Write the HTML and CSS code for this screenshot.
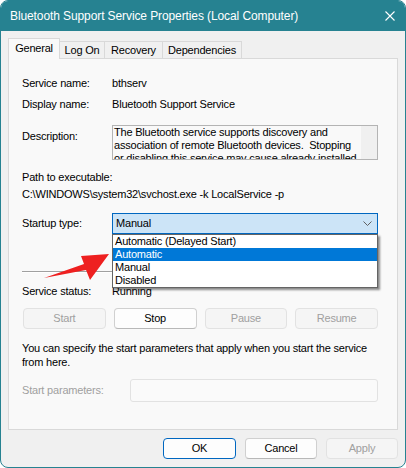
FILE: index.html
```html
<!DOCTYPE html>
<html>
<head>
<meta charset="utf-8">
<link rel="stylesheet" href="styles.css">
</head>
<body>
<div class="window">
  <div class="titlebar">
    <span class="title">Bluetooth Support Service Properties (Local Computer)</span>
    <svg class="close" width="10" height="10" viewBox="0 0 10 10"><path d="M0.5 0.5L9.5 9.5M9.5 0.5L0.5 9.5" stroke="#fff" stroke-width="1.1" fill="none"/></svg>
  </div>
  <div class="tabs">
    <div class="tab active t-general">General</div>
    <div class="tab t-logon">Log On</div>
    <div class="tab t-recovery">Recovery</div>
    <div class="tab t-deps">Dependencies</div>
  </div>
  <div class="panel">
    <div class="row row-name"><span class="label">Service name:</span><span>bthserv</span></div>
    <div class="row row-display"><span class="label">Display name:</span><span>Bluetooth Support Service</span></div>
    <div class="row row-desc">
      <span class="label desc-label">Description:</span>
      <div class="desc-box">
        <div class="desc-text">
          <span class="line">The Bluetooth service supports discovery and</span>
          <span class="line">association of remote Bluetooth devices.&nbsp; Stopping</span>
          <span class="line">or disabling this service may cause already installed</span>
        </div>
        <div class="desc-scroll"></div>
      </div>
    </div>
    <div class="path-label">Path to executable:</div>
    <div class="path-value">C:\WINDOWS\system32\svchost.exe -k LocalService -p</div>
    <div class="row row-startup">
      <span class="label">Startup type:</span>
      <div class="combo-wrap">
        <div class="combo">
          <span>Manual</span>
          <svg class="chev" width="9" height="5" viewBox="0 0 9 5"><path d="M0.5 0.5L4.5 4.5L8.5 0.5" stroke="#606060" stroke-width="1" fill="none"/></svg>
        </div>
        <div class="dropdown">
          <div class="opt">Automatic (Delayed Start)</div>
          <div class="opt selected">Automatic</div>
          <div class="opt">Manual</div>
          <div class="opt">Disabled</div>
        </div>
      </div>
    </div>
    <div class="separator"></div>
    <div class="row row-status"><span class="label">Service status:</span><span>Running</span></div>
    <div class="svc-buttons">
      <div class="btn disabled">Start</div>
      <div class="btn">Stop</div>
      <div class="btn disabled">Pause</div>
      <div class="btn disabled">Resume</div>
    </div>
    <p class="hint">You can specify the start parameters that apply when you start the service<br>from here.</p>
    <div class="row row-params">
      <span class="label params-label">Start parameters:</span>
      <div class="params-input"></div>
    </div>
  </div>
  <div class="footer">
    <div class="btn fbtn primary">OK</div>
    <div class="btn fbtn">Cancel</div>
    <div class="btn fbtn disabled">Apply</div>
  </div>
  <svg class="arrow" width="406" height="468" viewBox="0 0 406 468">
    <path d="M44 278 L84 264 L81 256 L109 254 L90 280 L86 270 Z" fill="#ee2020"/>
  </svg>
</div>
</body>
</html>
```

FILE: styles.css
```css
html, body {
  margin: 0;
  padding: 0;
  background: #ffffff;
}

body {
  font-family: "Liberation Sans", Arial, sans-serif;
  font-size: 11px;
  letter-spacing: -0.2px;
  color: #000;
}

.window {
  position: relative;
  width: 406px;
  height: 468px;
  box-sizing: border-box;
  border: 1px solid #268291;
  border-radius: 8px;
  background: #f0f0f0;
  overflow: hidden;
}

.titlebar {
  height: 30px;
  background: #268291;
  color: #fff;
  display: flex;
  align-items: center;
  justify-content: space-between;
  padding: 0 10px 0 9px;
}

.title {
  font-size: 12px;
  letter-spacing: -0.1px;
}

.close {
  display: block;
}

.tabs {
  display: flex;
  align-items: flex-end;
  height: 27px;
  padding-left: 7px;
}

.tab {
  height: 17px;
  box-sizing: border-box;
  border: 1px solid #d9d9d9;
  border-bottom: none;
  line-height: 16px;
  text-align: center;
  background: #f0f0f0;
  margin-left: -1px;
}

.tab.active {
  position: relative;
  z-index: 2;
  height: 21px;
  line-height: 18px;
  margin-left: 0;
  margin-bottom: -1px;
  background: #f9f9f9;
}

.t-general { width: 52px; }
.t-logon { width: 46px; }
.t-recovery { width: 59px; }
.t-deps { width: 80px; }

.panel {
  margin: 0 7px;
  height: 372px;
  box-sizing: border-box;
  border: 1px solid #d9d9d9;
  background: #f9f9f9;
  padding: 18px 18px 0 13px;
}

.row {
  display: flex;
  line-height: 13px;
}

.label {
  width: 90px;
  flex: none;
}

.row-display { margin-top: 8px; }

.row-desc { margin-top: 14px; }

.desc-label { padding-top: 5px; }

.desc-box {
  width: 266px;
  height: 35px;
  box-sizing: border-box;
  border: 1px solid #b4b4b4;
  display: flex;
  overflow: hidden;
  background: #f9f9f9;
}

.desc-text {
  flex: 1;
  padding: 0 0 0 1px;
  overflow: hidden;
}

.line {
  display: block;
  white-space: nowrap;
  line-height: 13px;
}

.desc-scroll {
  width: 16px;
  flex: none;
  background: #f0f0f0;
}

.path-label {
  margin-top: 11px;
  line-height: 13px;
}

.path-value {
  margin-top: 4px;
  line-height: 13px;
}

.row-startup {
  margin-top: 12px;
  line-height: 21px;
}

.combo-wrap {
  position: relative;
  width: 266px;
  height: 21px;
}

.combo {
  height: 21px;
  box-sizing: border-box;
  border: 1px solid #0067c0;
  background: #cce4f7;
  padding-left: 3px;
  line-height: 19px;
  display: flex;
  align-items: center;
  justify-content: space-between;
  padding-right: 5px;
}

.chev { display: block; }

.dropdown {
  position: absolute;
  z-index: 5;
  left: 0;
  top: 21px;
  width: 266px;
  box-sizing: border-box;
  border: 1px solid #646464;
  background: #fff;
  box-shadow: 2px 2px 2px rgba(0, 0, 0, 0.45);
}

.opt {
  height: 13px;
  line-height: 13px;
  padding-left: 2px;
}

.opt.selected {
  background: #0078d7;
  color: #fff;
}

.separator {
  margin-top: 37px;
  width: 356px;
  height: 1px;
  background: #a0a0a0;
  border-bottom: 1px solid #ffffff;
}

.row-status { margin-top: 12px; }

.svc-buttons {
  margin-top: 10px;
  margin-left: 1px;
  width: 355px;
  display: grid;
  grid-template-columns: repeat(4, 1fr);
  column-gap: 8px;
}

.btn {
  height: 21px;
  box-sizing: border-box;
  border: 1px solid #d0d0d0;
  border-bottom-color: #b8b8b8;
  border-radius: 4px;
  background: #fdfdfd;
  text-align: center;
  line-height: 19px;
}

.btn.disabled {
  border-color: #e2e2e2;
  background: #f5f5f5;
  color: #a0a0a0;
}

.hint {
  margin: 12px 0 0 0;
  line-height: 14px;
}

.row-params {
  margin-top: 10px;
  line-height: 23px;
}

.params-label {
  width: 108px;
  color: #a0a0a0;
}

.params-input {
  width: 248px;
  height: 23px;
  box-sizing: border-box;
  border: 1px solid #e2e2e2;
  border-radius: 3px;
  background: #fafafa;
}

.footer {
  display: flex;
  justify-content: flex-end;
  column-gap: 9px;
  padding: 8px 7px 0 0;
}

.fbtn { width: 72px; }

.fbtn.primary {
  width: 73px;
  border-color: #0067c0;
}

.arrow {
  position: absolute;
  left: -1px;
  top: -1px;
  z-index: 10;
  pointer-events: none;
}
```
